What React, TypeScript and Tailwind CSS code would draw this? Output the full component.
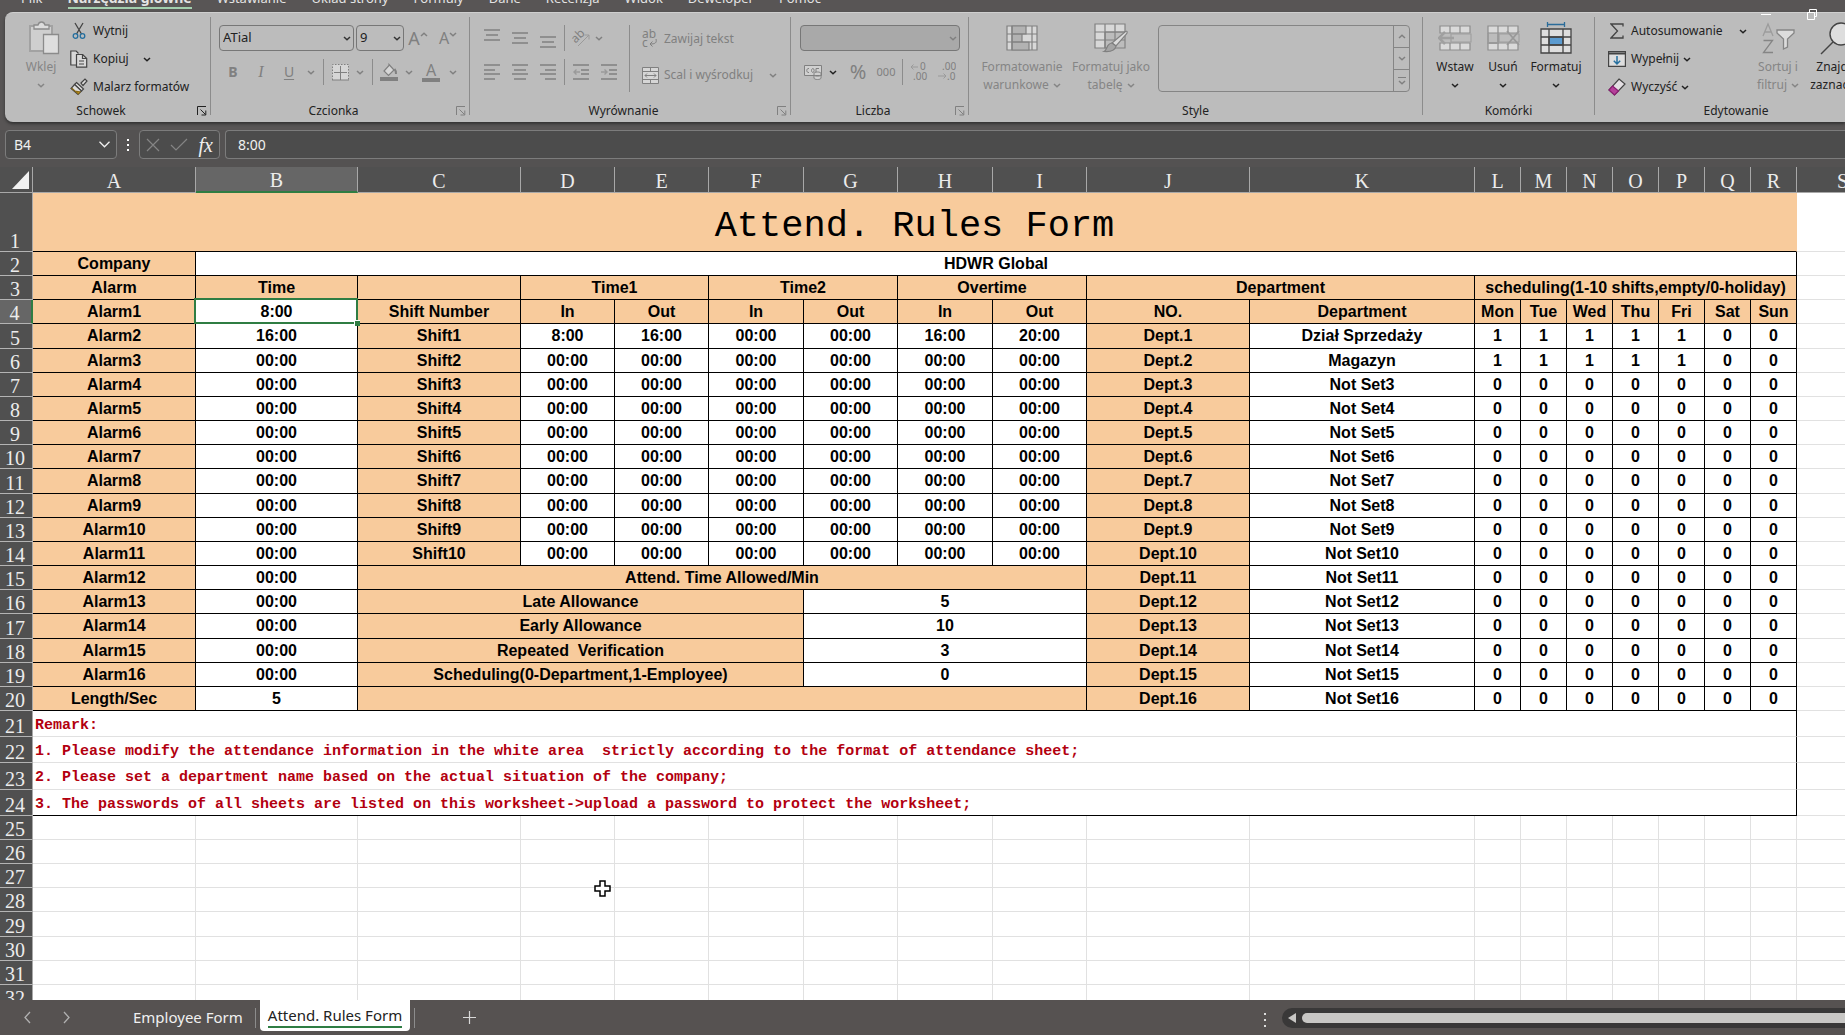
import type { ReactNode } from "react";
import clsx from "clsx";

const MENU = ["Plik", "Narzędzia główne", "Wstawianie", "Układ strony", "Formuły", "Dane", "Recenzja", "Widok", "Deweloper", "Pomoc"];

const COLUMNS = [
  { name: "A", width: "w-[163px]" },
  { name: "B", width: "w-[162px]" },
  { name: "C", width: "w-[163px]" },
  { name: "D", width: "w-[94px]" },
  { name: "E", width: "w-[94px]" },
  { name: "F", width: "w-[95px]" },
  { name: "G", width: "w-[94px]" },
  { name: "H", width: "w-[95px]" },
  { name: "I", width: "w-[94px]" },
  { name: "J", width: "w-[163px]" },
  { name: "K", width: "w-[225px]" },
  { name: "L", width: "w-[46px]" },
  { name: "M", width: "w-[46px]" },
  { name: "N", width: "w-[46px]" },
  { name: "O", width: "w-[46px]" },
  { name: "P", width: "w-[46px]" },
  { name: "Q", width: "w-[46px]" },
  { name: "R", width: "w-[46px]" },
  { name: "S", width: "" },
];

const REMARKS = [
  "Remark:",
  "1. Please modify the attendance information in the white area  strictly according to the format of attendance sheet;",
  "2. Please set a department name based on the actual situation of the company;",
  "3. The passwords of all sheets are listed on this worksheet->upload a password to protect the worksheet;",
];

const ALLOWANCES = [
  ["Late Allowance", "5"],
  ["Early Allowance", "10"],
  ["Repeated  Verification", "3"],
  ["Scheduling(0-Department,1-Employee)", "0"],
];

const DAYS = ["Mon", "Tue", "Wed", "Thu", "Fri", "Sat", "Sun"];
const DEPARTMENTS = ["Dział Sprzedaży", "Magazyn"];

/* ---------- ribbon ---------- */

function Chevron({ className }: { className?: string }) {
  return (
    <svg className={clsx("shrink-0", className)} width="8" height="5" viewBox="0 0 8 5" fill="none" stroke="currentColor" strokeWidth="1.5">
      <path d="M1 1l3 2.8L7 1" />
    </svg>
  );
}

function Divider({ className }: { className?: string }) {
  return <div className={clsx("w-px shrink-0 bg-[#8c8c8c]", className)} />;
}

function Group({ label, className, launcher, children }: { label: string; className: string; launcher?: "on" | "off"; children: ReactNode }) {
  return (
    <>
      <section className={clsx("flex shrink-0 flex-col", className)}>
        <div className="flex h-[84px]">{children}</div>
        <div className="flex h-5 items-center text-[#222]">
          <span className="flex-1 text-center">{label}</span>
          {launcher && (
            <button aria-label={label} className={clsx("w-[13px]", launcher === "on" ? "text-[#222]" : "text-[#808080]")}>
              <svg width="10" height="10" viewBox="0 0 10 10" fill="none" stroke="currentColor">
                <path d="M.5 9V.5H9M3.5 3.5l5 5M8.800 4.500V9H4.500" />
              </svg>
            </button>
          )}
        </div>
      </section>
      <Divider className="h-[98px]" />
    </>
  );
}

function Tool({ label, className, children }: { label: string; className?: string; children: ReactNode }) {
  return (
    <button aria-label={label} className={clsx("flex h-[26px] shrink-0 items-center justify-center text-[#808080]", className)}>
      {children}
    </button>
  );
}

function SmallButton({ icon, label, arrow, disabled }: { icon: ReactNode; label: string; arrow?: string; disabled?: boolean }) {
  return (
    <button className={clsx("flex h-7 items-center whitespace-nowrap", disabled ? "text-[#808080]" : "text-[#222]")}>
      <span className="flex w-7 justify-center">{icon}</span>
      {label}
      {arrow && <Chevron className={arrow} />}
    </button>
  );
}

function BigButton({ icon, lines, className, disabled }: { icon: ReactNode; lines: string[]; className: string; disabled?: boolean }) {
  return (
    <button className={clsx("flex shrink-0 flex-col items-center whitespace-nowrap leading-[18px]", disabled ? "text-[#858585]" : "text-[#222]", className)}>
      <span className="flex h-[41px] items-center">{icon}</span>
      <span>{lines[0]}</span>
      <span className="flex h-[18px] items-center gap-1">
        {lines[1]}
        <Chevron />
      </span>
    </button>
  );
}

function Lines({ rows }: { rows: number[][] }) {
  return (
    <svg width="16" height="20" viewBox="0 0 16 20" stroke="currentColor" strokeWidth="1.4">
      {rows.map(([y, from, to]) => (
        <path key={y} d={`M${from} ${y}H${to}`} />
      ))}
    </svg>
  );
}

function Indent({ out }: { out?: boolean }) {
  return (
    <svg width="16" height="20" viewBox="0 0 16 20" fill="none" stroke="currentColor" strokeWidth="1.400">
      <path d="M0 3h16M8 8h8M8 12h8M0 17h16" />
      <path d={out ? "M7 10H1M3.500 7.500L1 10l2.500 2.500" : "M0 10h6M3.500 7.500L6 10l-2.500 2.500"} stroke="#9a9a9a" />
    </svg>
  );
}

function PasteIcon() {
  return (
    <svg width="38" height="34" viewBox="-6 0 38 34" fill="none" stroke="#8b8b8b" strokeWidth="1.3">
      <path d="M2 5h22v25H2z" fill="#cfcfcf" stroke="#a2a2a2" strokeWidth="2" />
      <path d="M6 8V4h4c1-4 6-4 7 0h4v4z" fill="#dcdcdc" />
      <path d="M15.500 13.500h15v19h-15z" fill="#dedede" />
    </svg>
  );
}

function CutIcon() {
  return (
    <svg width="14" height="18" viewBox="0 0 14 18" fill="none" strokeWidth="1.3">
      <path d="M3 1l6.500 11M11 1L4.500 12" stroke="#444" />
      <circle cx="3.500" cy="14" r="2.300" stroke="#256f9f" />
      <circle cx="10.500" cy="14" r="2.300" stroke="#256f9f" />
    </svg>
  );
}

function CopyIcon() {
  return (
    <svg width="18" height="18" viewBox="0 0 18 18" fill="#d8d8d8" stroke="#444" strokeWidth="1.2">
      <path d="M6 15H.8V1h5.400l2.300 2.500" />
      <path d="M6.500 4.500h6.200l4 4v8.700H6.500z" />
      <path d="M12.500 4.500v4h4M9 11h5M9 14h5" fill="none" />
    </svg>
  );
}

function PainterIcon() {
  return (
    <svg width="18" height="18" viewBox="0 0 18 18" strokeWidth="1.2" stroke="#444">
      <path d="M11 5l4-4 2 2-4 4.500z" fill="#ddd" />
      <path d="M6.500 4.500l7 6.500-2 2-7-6.500z" fill="#ddd" />
      <path d="M4.500 6.500l7 6.500-3.500 3.500L1 10.500z" fill="#ddd" />
      <path d="M1.500 10l7 6 1.500-2-5-1z" fill="#d9a520" stroke="#8a6a14" />
    </svg>
  );
}

function CellsIcon({ kind }: { kind: "insert" | "delete" }) {
  return (
    <svg width="34" height="26" viewBox="0 0 34 26" fill="none" stroke="#8d8d8d" strokeWidth="1.2">
      <path d="M2 1h30v7H2zM2 18h30v7H2zM12 1v7M22 1v7M12 18v7M22 18v7" fill="#dadada" />
      <path d="M13 9h20v8H13z" fill="#bdbdbd" stroke="#a0a0a0" />
      {kind === "insert" ? <path d="M16 13H1M7 7l-6 6 6 6" stroke="#a0a0a0" strokeWidth="2.500" /> : <path d="M21 6l12 14M33 6L21 20M2 8v10h10V8" stroke="#999" strokeWidth="1.800" />}
    </svg>
  );
}

function FormatCellsIcon() {
  return (
    <svg width="32" height="32" viewBox="0 0 32 32" fill="none" stroke="#444" strokeWidth="1.3">
      <path d="M7.500 2.500h17M7.500 0v5M24.500 0v5" stroke="#2b6c9a" />
      <path d="M1 7h30v24H1z" fill="#dedede" />
      <path d="M9 15h14v8H9z" fill="#5b9bd0" />
      <path d="M1 15h30M1 23h30M9 7v24M23 7v24" />
    </svg>
  );
}

function ConditionalIcon() {
  return (
    <svg width="32" height="26" viewBox="0 0 32 26" fill="none" stroke="#808080" strokeWidth="1.2">
      <path d="M1 1h30v24H1z" fill="#d8d8d8" />
      <path d="M6 1h14v8H6zM6 9h10v8H6zM6 17h17v8H6z" fill="#b2b2b2" />
      <path d="M1 9h30M1 17h30M6 1v24M26 1v24" />
    </svg>
  );
}

function TableStyleIcon() {
  return (
    <svg width="34" height="30" viewBox="0 0 34 30" fill="none" stroke="#808080" strokeWidth="1.2">
      <path d="M1 1h30v8H1zM1 9h10v16H1z" fill="#d8d8d8" />
      <path d="M11 9h20v16H11zM1 17h30M11 1v24M21 1v24" />
      <path d="M31.500 8.500c2-1 2 1 1 2.500L22 23l-4-3z" fill="#dcdcdc" />
      <path d="M18 20l4 3c-1 5-6 6-12 5.500 4-2 2-8 8-8.500z" fill="#a5a5a5" />
    </svg>
  );
}

function Clipboard() {
  return (
    <Group label="Schowek" className="w-[205px]" launcher="on">
      <BigButton icon={<PasteIcon />} lines={["Wklej"]} className="ml-3 w-12" disabled />
      <div className="flex flex-col">
        <SmallButton icon={<CutIcon />} label="Wytnij" />
        <SmallButton icon={<CopyIcon />} label="Kopiuj" arrow="ml-3.5" />
        <SmallButton icon={<PainterIcon />} label="Malarz formatów" />
      </div>
    </Group>
  );
}

function Picker({ label, value, className, off }: { label: string; value: string; className: string; off?: boolean }) {
  return (
    <span className={clsx("relative block h-[26px]", className)}>
      <select
        aria-label={label}
        className={clsx("h-full w-full appearance-none rounded border border-[#777] px-[3px] text-[13px] text-[#222] outline-none", off && "bg-[#a9a9a9]")}
      >
        <option>{value}</option>
      </select>
      <Chevron className={clsx("pointer-events-none absolute right-[3px] top-[11px]", off ? "text-[#808080]" : "text-[#333]")} />
    </span>
  );
}

function FontGroup() {
  return (
    <Group label="Czcionka" className="w-[258px]" launcher="off">
      <div className="flex flex-col gap-2 pl-2 pt-2">
        <div className="flex">
          <Picker label="Czcionka" value="ATial" className="mr-0.5 w-[135px]" />
          <Picker label="Rozmiar" value="9" className="w-12" />
          <Tool label="Zwiększ" className="w-7 text-lg">
            A<Chevron className="mb-2 rotate-180" />
          </Tool>
          <Tool label="Zmniejsz" className="w-8 text-base">
            A<Chevron className="mb-2" />
          </Tool>
        </div>
        <div className="flex items-center">
          <Tool label="Pogrubienie" className="w-7 text-sm font-bold">B</Tool>
          <Tool label="Kursywa" className="w-7 font-['Liberation_Serif',serif] text-base italic">I</Tool>
          <Tool label="Podkreślenie" className="w-7 text-sm underline underline-offset-2">U</Tool>
          <Tool label="Więcej podkreśleń" className="w-4"><Chevron /></Tool>
          <Divider className="mx-1 h-[26px]" />
          <Tool label="Obramowanie" className="w-6">
            <svg width="17" height="17" viewBox="0 0 17 17" fill="#d6d6d6" stroke="currentColor">
              <path d="M.5 16V.5h16V16" strokeDasharray="1.500 1.500" />
              <path d="M8.500 2v14M2 8.500h13M0 16h17" />
            </svg>
          </Tool>
          <Tool label="Więcej obramowań" className="w-4"><Chevron /></Tool>
          <Divider className="mx-1 h-[26px]" />
          <Tool label="Wypełnienie" className="w-6">
            <svg width="18" height="18" viewBox="0 0 18 18" fill="none" stroke="currentColor" strokeWidth="1.2">
              <path d="M9 1.500L14 7l-5.500 5.500L4 8l5-5.500z" fill="#d6d6d6" />
              <path d="M14.500 6c1.500 1.500 1.500 3 1.500 5" strokeWidth="2" />
              <path d="M0 16h18" strokeWidth="4" />
            </svg>
          </Tool>
          <Tool label="Więcej wypełnień" className="w-4"><Chevron /></Tool>
          <Tool label="Kolor czcionki" className="w-7">
            <span className="block w-[18px] border-b-4 border-current text-base leading-4">A</span>
          </Tool>
          <Tool label="Więcej kolorów" className="w-4"><Chevron /></Tool>
        </div>
      </div>
    </Group>
  );
}

function Alignment() {
  return (
    <Group label="Wyrównanie" className="w-[320px]" launcher="off">
      <div className="flex w-[159px] shrink-0 flex-col gap-2 pl-2 pt-2">
        <div className="flex">
          <Tool label="Do góry" className="w-7"><Lines rows={[[2, 0, 16], [7, 2, 14], [12, 0, 16]]} /></Tool>
          <Tool label="Do środka w pionie" className="w-7"><Lines rows={[[5, 0, 16], [10, 2, 14], [15, 0, 16]]} /></Tool>
          <Tool label="Do dołu" className="w-7"><Lines rows={[[9, 0, 16], [14, 2, 14], [19, 0, 16]]} /></Tool>
          <Divider className="mx-0.5 h-[26px]" />
          <Tool label="Orientacja" className="w-7">
            <svg width="20" height="20" viewBox="0 0 20 20" fill="none" stroke="currentColor">
              <text x="1" y="13" fontSize="12" fill="currentColor" stroke="none" transform="rotate(-45 6 10)">ab</text>
              <path d="M7 18L18 7M13.500 7H18v4.500" stroke="#9a9a9a" />
            </svg>
          </Tool>
          <Tool label="Więcej orientacji" className="w-2"><Chevron /></Tool>
        </div>
        <div className="flex">
          <Tool label="Do lewej" className="w-7"><Lines rows={[[3, 0, 16], [8, 0, 11], [12, 0, 16], [17, 0, 11]]} /></Tool>
          <Tool label="Do środka" className="w-7"><Lines rows={[[3, 0, 16], [8, 2, 14], [12, 0, 16], [17, 2, 14]]} /></Tool>
          <Tool label="Do prawej" className="w-7"><Lines rows={[[3, 0, 16], [8, 5, 16], [12, 0, 16], [17, 5, 16]]} /></Tool>
          <Divider className="mx-0.5 h-[26px]" />
          <Tool label="Zmniejsz wcięcie" className="w-7"><Indent out /></Tool>
          <Tool label="Zwiększ wcięcie" className="w-7"><Indent /></Tool>
        </div>
      </div>
      <Divider className="mt-2 h-[67px]" />
      <div className="flex flex-col gap-2 pl-1.5 pt-2">
        <SmallButton
          disabled
          label="Zawijaj tekst"
          icon={
            <svg width="16" height="20" viewBox="0 0 16 20" fill="none" stroke="currentColor">
              <text x="0" y="9" fontSize="12" fill="currentColor" stroke="none">ab</text>
              <text x="0" y="18" fontSize="12" fill="currentColor" stroke="none">c</text>
              <path d="M14 10c1 4-1 5-6 5M10.500 12.500L8 15l2.500 2.500" />
            </svg>
          }
        />
        <SmallButton
          disabled
          label="Scal i wyśrodkuj"
          arrow="ml-4"
          icon={
            <svg width="17" height="17" viewBox="0 0 17 17" fill="none" stroke="currentColor">
              <path d="M.5.5h16v16H.5zM.5 4.500h16M.5 12.500h16M8.500.5v4M8.500 12.500v4" fill="#d6d6d6" />
              <path d="M3 8.500h11M5 6.500l-2 2 2 2M12 6.500l2 2-2 2" />
            </svg>
          }
        />
      </div>
    </Group>
  );
}

function DecimalIcon({ more }: { more?: boolean }) {
  return (
    <svg width="18" height="20" viewBox="0 0 18 20" fill="none" stroke="currentColor">
      <text x={more ? 10 : 4} y="8" fontSize="10" fill="currentColor" stroke="none">{more ? "0" : ".00"}</text>
      <text x={more ? 3 : 9} y="18" fontSize="10" fill="currentColor" stroke="none">{more ? ".00" : ".0"}</text>
      <path d={more ? "M8 5H1M3.500 2.500L1 5l2.500 2.500" : "M0 14h8M5.500 11.500L8 14l-2.500 2.500"} stroke="#9a9a9a" />
    </svg>
  );
}

function NumberGroup() {
  return (
    <Group label="Liczba" className="w-[177px]" launcher="off">
      <div className="flex flex-col gap-2 pl-[9px] pt-2">
        <Picker label="Format liczb" value="" className="w-40" off />
        <div className="flex">
          <Tool label="Format księgowy" className="w-[26px]">
            <svg width="18" height="15" viewBox="0 0 18 15" fill="#d0d0d0" stroke="currentColor">
              <path d="M.5.5h17v10H.5z" />
              <path d="M5 3.500c-3-.5-3 4.500 0 4M9 3.500c-2 0-2 4 0 4 1.500 0 1.500-4 0-4M12 8V3.500h3" fill="none" />
              <path d="M10 8.500c0-2 7-2 7 0v4.500c0 2-7 2-7 0zM10 10c0 1.500 7 1.500 7 0" />
            </svg>
          </Tool>
          <Tool label="Waluty" className="w-3.5"><Chevron className="text-[#222]" /></Tool>
          <Tool label="Procent" className="w-9 text-xl">%</Tool>
          <Tool label="Zapis dziesiętny" className="w-5 text-[11px]">000</Tool>
          <Divider className="ml-1.5 mr-0.5 h-[26px]" />
          <Tool label="Zwiększ dziesiętne" className="w-7"><DecimalIcon more /></Tool>
          <Tool label="Zmniejsz dziesiętne" className="w-7"><DecimalIcon /></Tool>
        </div>
      </div>
    </Group>
  );
}

function Styles() {
  return (
    <Group label="Style" className="w-[453px]">
      <BigButton icon={<ConditionalIcon />} lines={["Formatowanie", "warunkowe"]} className="ml-2 w-[90px]" disabled />
      <BigButton icon={<TableStyleIcon />} lines={["Formatuj jako", "tabelę"]} className="w-[88px]" disabled />
      <div className="ml-[3px] mt-2 flex h-[67px] w-[252px] rounded border border-[#858585] text-[#808080]">
        <div className="flex-1" />
        <div className="flex w-4 flex-col divide-y divide-[#858585] border-l border-[#858585]">
          <button aria-label="W górę" className="flex flex-1 items-center justify-center"><Chevron className="rotate-180" /></button>
          <button aria-label="W dół" className="flex flex-1 items-center justify-center"><Chevron /></button>
          <button aria-label="Więcej stylów" className="flex flex-1 flex-col items-center justify-center gap-0.5">
            <span className="h-px w-2 bg-current" />
            <Chevron />
          </button>
        </div>
      </div>
    </Group>
  );
}

function Cells() {
  return (
    <Group label="Komórki" className="w-[171px]">
      <BigButton icon={<CellsIcon kind="insert" />} lines={["Wstaw"]} className="ml-2 w-12" />
      <BigButton icon={<CellsIcon kind="delete" />} lines={["Usuń"]} className="w-12" />
      <BigButton icon={<FormatCellsIcon />} lines={["Formatuj"]} className="w-[58px]" />
    </Group>
  );
}

function Editing() {
  return (
    <Group label="Edytowanie" className="w-[282px]">
      <div className="ml-2 flex w-[151px] shrink-0 flex-col">
        <SmallButton
          label="Autosumowanie"
          arrow="ml-4"
          icon={
            <svg width="14" height="16" viewBox="0 0 14 16" fill="none" stroke="#444" strokeWidth="1.3">
              <path d="M13 3.500V1H1l6.500 7L1 15h12v-2.500" />
            </svg>
          }
        />
        <SmallButton
          label="Wypełnij"
          arrow="ml-1"
          icon={
            <svg width="18" height="16" viewBox="0 0 18 16" fill="none" stroke="#444" strokeWidth="1.2">
              <path d="M.6.6h16.800v14.800H.6z" fill="#dedede" />
              <path d="M.6 2.500h16.800" strokeWidth="2" />
              <path d="M9 5v8M5.800 9.800L9 13l3.200-3.200" stroke="#256f9f" strokeWidth="1.500" />
            </svg>
          }
        />
        <SmallButton
          label="Wyczyść"
          arrow="ml-1"
          icon={
            <svg width="18" height="18" viewBox="0 0 18 18" stroke="#444" strokeWidth="1.2">
              <path d="M11 1l6 5L6.500 17l-5.500-5z" fill="#e4dfe3" />
              <path d="M4.500 8l6 5-4 4L1 12z" fill="#b5409a" stroke="#8a1f72" />
            </svg>
          }
        />
      </div>
      <BigButton
        disabled
        lines={["Sortuj i", "filtruj"]}
        className="w-12"
        icon={
          <svg width="33" height="32" viewBox="0 0 33 32" fill="none" stroke="#858585" strokeWidth="1.3">
            <path d="M1 14L6 2l5 12M3 10h6" stroke="#9c9c9c" />
            <path d="M1.500 18.500h9l-9 12h9.500" />
            <path d="M15 8h17v3l-6.500 6v8l-4 2V17L15 11z" fill="#dcdcdc" />
          </svg>
        }
      />
      <BigButton
        lines={["Znajdź i", "zaznacz"]}
        className="ml-1 w-16"
        icon={
          <svg width="38" height="34" viewBox="0 0 38 34" fill="#dedede" stroke="#444" strokeWidth="1.4">
            <circle cx="22" cy="13" r="11" />
            <path d="M14 21L2 33" />
          </svg>
        }
      />
    </Group>
  );
}

function Ribbon() {
  return (
    <header className="relative bg-[#585555] pb-2 pl-[5px]">
      <nav className="flex h-3 items-end gap-[25px] overflow-hidden pl-4 leading-[18px] text-[#e4e4e4]">
        {MENU.map((item) => (
          <a
            key={item}
            href="#"
            className={clsx(
              "mb-[3px] whitespace-nowrap border-b-2",
              item === "Narzędzia główne" ? "border-[#a3cfae] text-sm font-bold leading-[18px]" : "border-transparent text-[13px] leading-[18px]",
            )}
          >
            {item}
          </a>
        ))}
      </nav>
      <div className="flex h-[110px] overflow-hidden rounded-l-lg border-t border-[#cfcfcf] bg-[#bcbcbc] pt-1 text-xs shadow-[0_2px_3px_#333]">
        <Clipboard />
        <FontGroup />
        <Alignment />
        <NumberGroup />
        <Styles />
        <Cells />
        <Editing />
      </div>
      <div className="absolute right-7 top-2 flex items-center gap-9 text-white">
        <button aria-label="Minimalizuj" className="h-px w-2.5 bg-white" />
        <button aria-label="Przywróć">
          <svg width="10" height="12" viewBox="0 0 10 12" fill="none" stroke="currentColor">
            <path d="M.5 4.500h7v7h-7zM2.500 4V1.500h7v7H8" />
          </svg>
        </button>
      </div>
    </header>
  );
}

function FormulaBar() {
  return (
    <div className="flex h-[37px] shrink-0 items-start bg-[#545252] pl-[5px] text-[#f0f0f0]">
      <div className="flex h-[29px] w-28 items-center rounded border border-[#7c7c7c] bg-[#4c4c4c] pl-2 pr-1.5">
        <input aria-label="Pole nazwy" defaultValue="B4" className="w-full min-w-0 bg-transparent text-sm outline-none" />
        <svg className="shrink-0" width="11" height="7" viewBox="0 0 11 7" fill="none" stroke="currentColor" strokeWidth="1.3">
          <path d="M.5.8l5 5 5-5" />
        </svg>
      </div>
      <div className="flex h-[29px] w-[22px] flex-col items-center justify-center gap-[3px]">
        <span className="size-0.5 bg-white" />
        <span className="size-0.5 bg-white" />
        <span className="size-0.5 bg-white" />
      </div>
      <div className="mr-[5px] flex h-[29px] w-[81px] shrink-0 items-center justify-between rounded border border-[#7c7c7c] bg-[#4c4c4c] px-1.5">
        <button aria-label="Anuluj">
          <svg width="14" height="14" viewBox="0 0 14 14" stroke="#858585" strokeWidth="1.2"><path d="M1 1l12 12M13 1L1 13" /></svg>
        </button>
        <button aria-label="Wpis">
          <svg width="18" height="14" viewBox="0 0 18 14" fill="none" stroke="#858585" strokeWidth="1.2"><path d="M1 7l5 5L17 1" /></svg>
        </button>
        <button aria-label="Wstaw funkcję" className="font-['Liberation_Serif',serif] text-xl italic leading-6">fx</button>
      </div>
      <input
        aria-label="Pasek formuły"
        defaultValue="8:00"
        className="h-[29px] min-w-0 flex-1 rounded-l border border-r-0 border-[#7c7c7c] bg-[#4c4c4c] px-3 text-sm outline-none"
      />
    </div>
  );
}

/* ---------- sheet ---------- */

function rowHeight(row: number) {
  if (row === 1) return "h-[59px]";
  if (row >= 21 && row <= 24) return row === 23 ? "h-[27px]" : "h-[26px]";
  return row % 6 === 5 ? "h-[25px]" : "h-6";
}

function Cell({ children, span, peach, className }: { children?: ReactNode; span?: number; peach?: boolean; className?: string }) {
  return (
    <td colSpan={span} className={clsx("whitespace-pre border-b border-r border-black text-center", peach ? "bg-[#f8cb9c]" : "bg-white", className ?? "p-0")}>
      {children}
    </td>
  );
}

function BlankCells({ count }: { count: number }) {
  return (
    <>
      {Array.from({ length: count }, (_, i) => (
        <td key={i} className="border-b border-r border-[#e1e1e1] p-0" />
      ))}
    </>
  );
}

function ShiftCells({ row }: { row: number }) {
  if (row === 15) return <Cell span={7} peach>Attend. Time Allowed/Min</Cell>;
  if (row === 20) return <Cell span={7} peach />;
  if (row > 15) {
    const [label, value] = ALLOWANCES[row - 16];
    return (
      <>
        <Cell span={4} peach>{label}</Cell>
        <Cell span={3}>{value}</Cell>
      </>
    );
  }
  const times = row === 5 ? ["8:00", "16:00", "00:00", "00:00", "16:00", "20:00"] : Array(6).fill("00:00");
  return (
    <>
      <Cell peach>Shift{row - 4}</Cell>
      {times.map((time, i) => (
        <Cell key={i}>{time}</Cell>
      ))}
    </>
  );
}

function RowCells({ row }: { row: number }) {
  if (row === 1)
    return (
      <Cell span={18} peach className="border-r-[#f8cb9c] p-0 pt-2 font-['Liberation_Mono',monospace] text-[37px] font-normal leading-10">
        Attend. Rules Form
      </Cell>
    );
  if (row === 2)
    return (
      <>
        <Cell peach>Company</Cell>
        <Cell span={17}>HDWR Global</Cell>
      </>
    );
  if (row === 3)
    return (
      <>
        <Cell peach>Alarm</Cell>
        <Cell peach>Time</Cell>
        <Cell peach />
        <Cell span={2} peach>Time1</Cell>
        <Cell span={2} peach>Time2</Cell>
        <Cell span={2} peach>Overtime</Cell>
        <Cell span={2} peach>Department</Cell>
        <Cell span={7} peach>scheduling(1-10 shifts,empty/0-holiday)</Cell>
      </>
    );
  if (row === 4)
    return (
      <>
        <Cell peach>Alarm1</Cell>
        <Cell className="relative p-0">
          8:00
          <span className="pointer-events-none absolute -inset-px -left-0.5 -top-0.5 border-2 border-[#2f7d43]" />
          <span className="absolute -bottom-[3px] -right-[3px] size-[6px] border-l border-t border-white bg-[#2f7d43]" />
        </Cell>
        <Cell peach>Shift Number</Cell>
        {["In", "Out", "In", "Out", "In", "Out", "NO.", "Department", ...DAYS].map((label, i) => (
          <Cell key={i} peach>{label}</Cell>
        ))}
      </>
    );
  if (row <= 20) {
    const dept = row - 4;
    return (
      <>
        <Cell peach>{row === 20 ? "Length/Sec" : `Alarm${row - 3}`}</Cell>
        <Cell>{row === 20 ? "5" : row === 5 ? "16:00" : "00:00"}</Cell>
        <ShiftCells row={row} />
        <Cell peach>Dept.{dept}</Cell>
        <Cell>{DEPARTMENTS[dept - 1] ?? `Not Set${dept}`}</Cell>
        {DAYS.map((day, i) => (
          <Cell key={day}>{dept <= 2 && i < 5 ? "1" : "0"}</Cell>
        ))}
      </>
    );
  }
  if (row <= 24)
    return (
      <td
        colSpan={18}
        className={clsx(
          "whitespace-pre border-b border-r border-r-black p-0 pl-0.5 pt-1 text-left font-['Liberation_Mono',monospace] text-[15px] leading-5 text-[#b3000f]",
          row === 24 ? "border-b-black" : "border-b-[#e1e1e1]",
        )}
      >
        {REMARKS[row - 21]}
      </td>
    );
  return <BlankCells count={18} />;
}

function Sheet() {
  return (
    <main className="relative min-h-0 flex-1 overflow-hidden bg-white">
      <table className="w-full min-w-[1889px] table-fixed border-separate border-spacing-0 font-['Liberation_Sans',Arial,sans-serif] text-base font-bold leading-5 text-black">
        <colgroup>
          <col className="w-[33px]" />
          {COLUMNS.map((column) => (
            <col key={column.name} className={column.width} />
          ))}
        </colgroup>
        <thead>
          <tr className="h-[26px] bg-[#505050] font-['Liberation_Serif',serif] text-xl leading-5 text-[#ececec]">
            <th className="border-b border-r border-[#a8a8a8] p-0">
              <svg className="ml-3" width="17" height="18" viewBox="0 0 17 18" fill="#f2f2f2">
                <path d="M17 0v18H0z" />
              </svg>
            </th>
            {COLUMNS.map(({ name }) => (
              <th
                key={name}
                scope="col"
                className={clsx("border-r border-r-[#a8a8a8] p-0 pt-0.5 font-normal", name === "B" ? "border-b-2 border-b-[#2f7d43] bg-[#666]" : "border-b border-b-[#a8a8a8]")}
              >
                {name}
              </th>
            ))}
          </tr>
        </thead>
        <tbody>
          {Array.from({ length: 32 }, (_, i) => i + 1).map((row) => (
            <tr key={row} className={rowHeight(row)}>
              <th
                scope="row"
                className={clsx(
                  "border-b border-r border-b-[#b4b4b4] p-0 pr-0.5 align-bottom font-['Liberation_Serif',serif] text-xl font-normal leading-5 text-[#ececec]",
                  row === 4 ? "border-r-2 border-r-[#2f7d43] bg-[#666]" : "border-r-[#a8a8a8] bg-[#505050]",
                )}
              >
                {row}
              </th>
              <RowCells row={row} />
              <BlankCells count={1} />
            </tr>
          ))}
        </tbody>
      </table>
      {/* cell pointer */}
      <svg className="pointer-events-none absolute left-[594px] top-[713px]" width="17" height="17" viewBox="0 0 17 17" fill="#fff" stroke="#000" strokeWidth="1.5">
        <path d="M6 1h5v5h5v5h-5v5H6v-5H1V6h5z" />
      </svg>
    </main>
  );
}

function SheetTabs() {
  return (
    <footer className="flex h-[35px] shrink-0 items-start bg-[#565251] text-[15px] text-[#f0f0f0]">
      <div className="flex h-[35px] w-[133px] items-center gap-8 pl-6">
        {["M6 1L1 6.500 6 12", "M1 1l5 5.500L1 12"].map((d, i) => (
          <button key={d} aria-label={i ? "Następny arkusz" : "Poprzedni arkusz"}>
            <svg width="7" height="13" viewBox="0 0 7 13" fill="none" stroke="#b0b0b0" strokeWidth="1.3"><path d={d} /></svg>
          </button>
        ))}
      </div>
      <button className="h-[35px] whitespace-nowrap">Employee Form</button>
      <Divider className="ml-3 mr-1 mt-2 h-5" />
      <button className="flex h-[31px] items-center whitespace-nowrap rounded-b bg-white px-2 text-[#222]">
        <span className="border-b-2 border-[#2f7d43] leading-[22px]">Attend. Rules Form</span>
      </button>
      <Divider className="ml-1 mt-2 h-5" />
      <button aria-label="Nowy arkusz" className="ml-12 flex h-[35px] items-center">
        <svg width="13" height="13" viewBox="0 0 13 13" stroke="#d8d8d8" strokeWidth="1.2"><path d="M6.500 0v13M0 6.500h13" /></svg>
      </button>
      <div className="ml-auto flex h-[35px] w-[31.500%] items-center">
        <div className="mr-4 mt-1 flex flex-col gap-1">
          <span className="size-0.5 bg-[#ddd]" />
          <span className="size-0.5 bg-[#ddd]" />
          <span className="size-0.5 bg-[#ddd]" />
        </div>
        <div className="flex h-5 flex-1 items-center gap-1.5 rounded-l-full bg-[#393838] pl-1.5">
          <button aria-label="Przewiń w lewo">
            <svg className="block" width="8" height="10" viewBox="0 0 8 10" fill="#c8c7c5"><path d="M8 0v10L0 5z" /></svg>
          </button>
          <div className="h-2.5 flex-1 rounded-l-full bg-[#c8c7c5]" />
        </div>
      </div>
    </footer>
  );
}

export default function App() {
  return (
    <div className="flex h-screen flex-col overflow-hidden bg-[#545252] font-['Noto_Sans','Open_Sans',sans-serif]">
      <Ribbon />
      <FormulaBar />
      <Sheet />
      <SheetTabs />
    </div>
  );
}
